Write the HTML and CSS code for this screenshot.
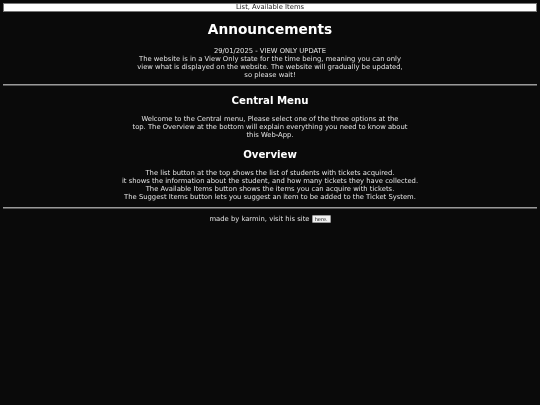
FILE: index.html
```html
<!DOCTYPE html>
<html>
<head>
<meta charset="utf-8">
<link rel="stylesheet" href="styles.css">
</head>
<body>
<div class="nav">List, Available Items</div>
<section class="block">
  <h1 class="title">Announcements</h1>
  <p class="text">29/01/2025 - VIEW ONLY UPDATE<br>The website is in a View Only state for the time being, meaning you can only<br>view what is displayed on the website. The website will gradually be updated,<br>so please wait!</p>
</section>
<hr class="rule">
<section class="block">
  <h2 class="heading">Central Menu</h2>
  <p class="text">Welcome to the Central menu, Please select one of the three options at the<br>top. The Overview at the bottom will explain everything you need to know about<br>this Web-App.</p>
  <h2 class="heading second">Overview</h2>
  <p class="text">The list button at the top shows the list of students with tickets acquired.<br>it shows the information about the student, and how many tickets they have collected.<br>The Available Items button shows the items you can acquire with tickets.<br>The Suggest Items button lets you suggest an item to be added to the Ticket System.</p>
</section>
<hr class="rule lower">
<footer class="footer">made by karmin, visit his site <button class="here">here.</button></footer>
</body>
</html>
```
FILE: styles.css
```css
html {
  background: #0a0a0a;
}
body {
  margin: 3px;
  font-family: "DejaVu Sans", Verdana, sans-serif;
  color: #e2e2e2;
  font-size: 6.8px;
  line-height: 8px;
  text-align: center;
  will-change: transform;
}
.nav {
  background: #fff;
  color: #1a1a1a;
  border: 1px solid #777;
  height: 7px;
  line-height: 7px;
  font-size: 6.8px;
}
.title {
  font-size: 13.7px;
  line-height: 18px;
  margin: 8px 0 0;
  color: #fff;
}
.text {
  margin: 0;
}
.block .title + .text {
  margin-top: 9px;
}
.rule {
  border: 0;
  border-top: 1px solid #999;
  border-bottom: 1px solid #555;
  margin: 5px 0 0;
  height: 0;
}
.rule.lower {
  margin-top: 6px;
}
.heading {
  font-size: 10.2px;
  line-height: 13px;
  margin: 7.5px 0 8.5px;
  color: #fff;
}
.heading.second {
  margin-top: 8.5px;
}
.footer {
  margin-top: 6px;
}
.here {
  font-family: "DejaVu Sans", sans-serif;
  font-size: 5px;
  line-height: 6px;
  padding: 0 2px;
  background: #f0f0f0;
  color: #111;
  border: 1px solid #999;
  border-radius: 1px;
}
```
